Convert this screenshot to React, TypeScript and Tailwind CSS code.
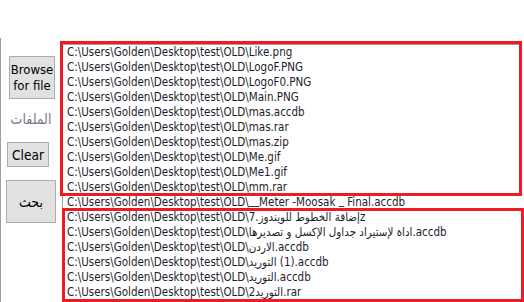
const FONT = "font-['Tahoma','DejaVu_Sans_Condensed','Liberation_Sans',sans-serif]";

const base = "C:\\Users\\Golden\\Desktop\\test\\OLD\\";

type Row = { pre: React.ReactNode; ar?: string; post?: string };

// underscores sit a little higher in the original font
const U = ({ s }: { s: string }) => <span className="relative -top-[2px]">{s}</span>;

const rows: Row[] = [
  { pre: base + "Like.png" },
  { pre: base + "LogoF.PNG" },
  { pre: base + "LogoF0.PNG" },
  { pre: base + "Main.PNG" },
  { pre: base + "mas.accdb" },
  { pre: base + "mas.rar" },
  { pre: base + "mas.zip" },
  { pre: base + "Me.gif" },
  { pre: base + "Me1.gif" },
  { pre: base + "mm.rar" },
  {
    pre: (
      <>
        {base}
        <U s="__" />
        {"Meter -Moosak "}
        <U s="_" />
        {" Final.accdb"}
      </>
    ),
  },
  { pre: base + "7.", ar: "إضافة الخطوط للويندوز", post: "z" },
  { pre: base, ar: "اداة لإستيراد جداول الإكسل و تصديرها", post: ".accdb" },
  { pre: base, ar: "الاردن", post: ".accdb" },
  { pre: base, ar: "التوريد", post: " (1).accdb" },
  { pre: base, ar: "التوريد", post: ".accdb" },
  { pre: base + "2", ar: "التوريد", post: ".rar" },
];

function Btn({ className, children }: { className: string; children: React.ReactNode }) {
  return (
    <button
      type="button"
      className={`flex items-center justify-center border border-[#adadad] bg-[#e1e1e1] leading-[16px] text-black ${className}`}
    >
      {children}
    </button>
  );
}

export default function App() {
  return (
    <div className={`relative flex h-[302px] w-[524px] overflow-hidden bg-white ${FONT}`}>
      {/* left panel */}
      <div className="mt-[38px] flex w-[62px] shrink-0 flex-col border-l border-[#a0a0a0]">
        <Btn className="ml-[8px] mt-[18px] h-[43px] w-[46px] flex-col text-[13px]">
          <span>Browse</span>
          <span>for file</span>
        </Btn>
        <div className="ml-[9px] mt-[12px] h-[16px] w-[42px] text-center text-[14px] leading-[16px] text-[#77778a]">
          الملفات
        </div>
        <Btn className="ml-[6px] mt-[15px] h-[25px] w-[42px] text-[13.5px]">Clear</Btn>
        <Btn className="ml-[5px] mt-[13px] h-[43px] w-[50px] text-[14px] font-normal">بحث</Btn>
      </div>

      {/* list box */}
      <div className="mt-[44px] h-[280px] w-[460px] shrink-0 border-l border-t border-[#a0a0a0] bg-white pl-[4px] text-[11.5px] leading-[15px] text-[#1c1c2c]">
        {rows.map((r, i) => (
          <div key={i} className="whitespace-pre">
            {r.pre}
            {r.ar && <bdi>{r.ar}</bdi>}
            {r.post}
          </div>
        ))}
      </div>

      {/* red annotation boxes */}
      <div className="pointer-events-none absolute left-[60px] top-[41px] h-[155px] w-[462px] border-[3px] border-[#ed1c24]" />
      <div className="pointer-events-none absolute left-[62px] top-[208px] h-[94px] w-[462px] border-[3px] border-[#ed1c24]" />
    </div>
  );
}
